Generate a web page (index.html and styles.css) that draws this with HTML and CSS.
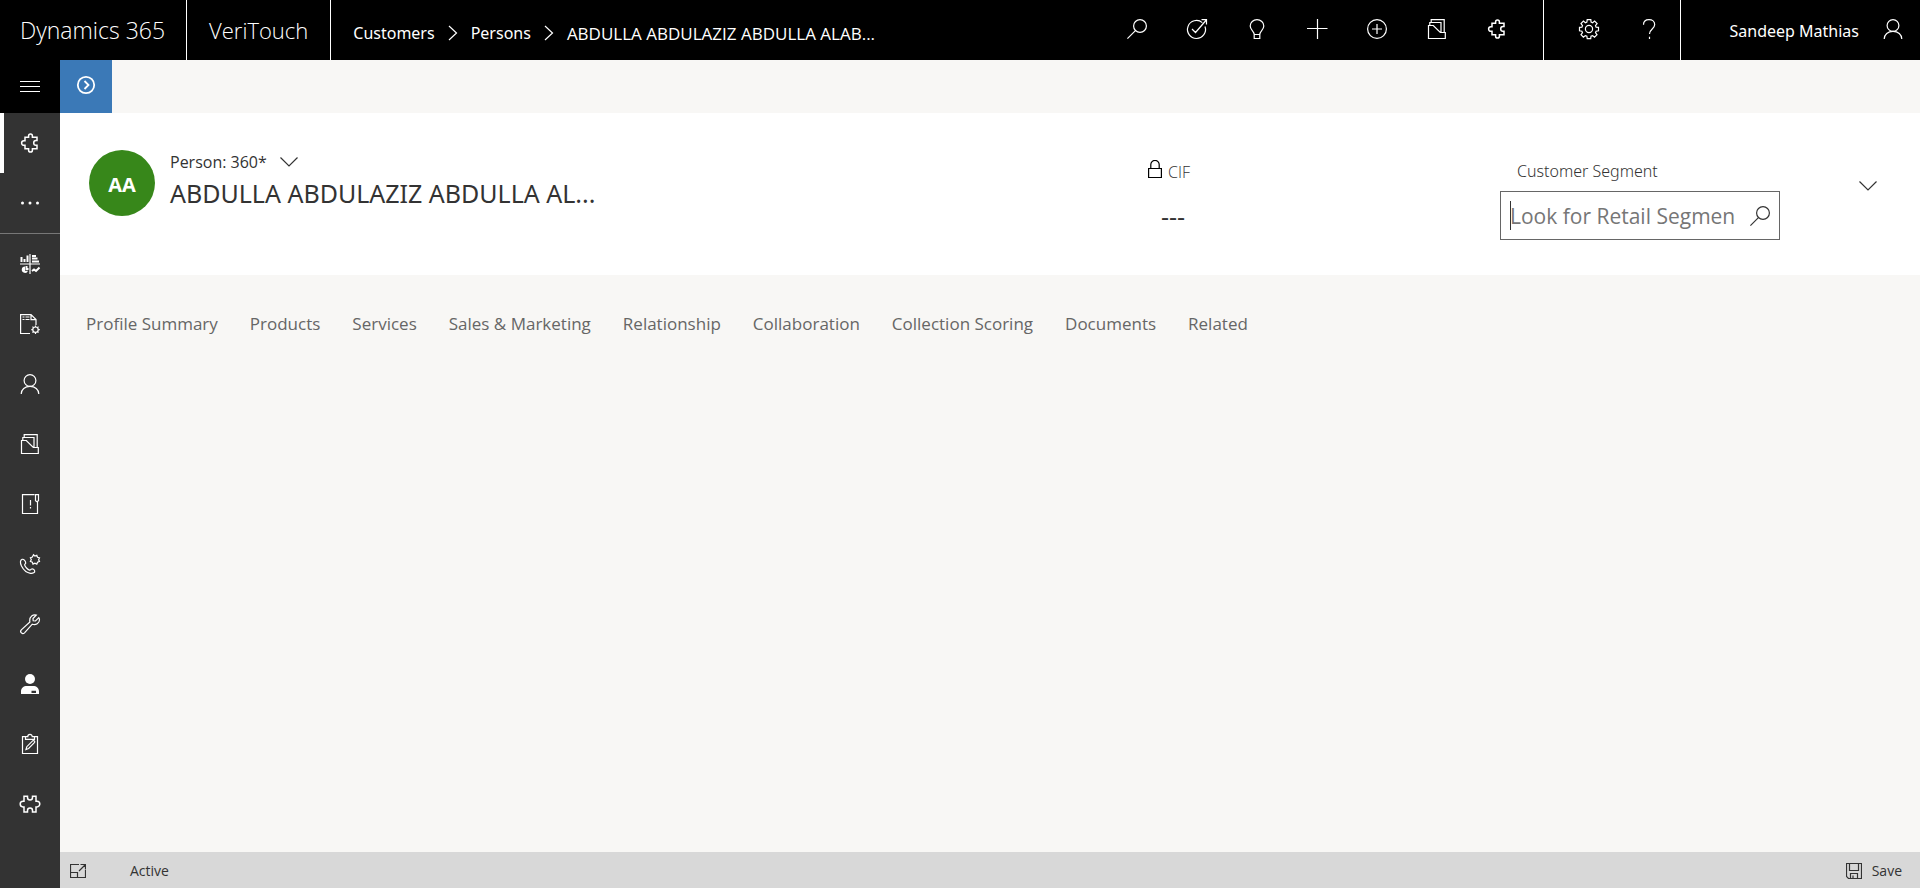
FILE: index.html
```html
<!DOCTYPE html>
<html lang="en">
<head>
<meta charset="utf-8">
<title>Person: ABDULLA ABDULAZIZ - Dynamics 365</title>
<link rel="stylesheet" href="styles.css">
</head>
<body>
<svg class="sprite" aria-hidden="true">
  <symbol id="search" viewBox="0 0 20 20"><circle cx="13" cy="7" r="6.4"/><path d="M8.4 11.6 0.4 19.6"/></symbol>
  <symbol id="puzzle" viewBox="0 0 20 20"><path stroke-width="1.5" d="M5 4.200h3.600V3a1.900 1.900 0 0 1 3.800 0v1.200H17v3.400h-1a2.300 2.300 0 0 0 0 4.600h1v3.600h-4.600v1.400a1.900 1.900 0 0 1-3.800 0v-1.400H5v-3.500H3.900a2.300 2.300 0 0 1 0-4.600H5z"/></symbol>
  <symbol id="folder" viewBox="0 0 20 20"><path d="M1.500 6.500h4.800l7 7h5v6H1.500zM2.800 6.500V3.500h11.200v10M4.200 3.500V.6h13v12.900"/></symbol>
  <symbol id="person" viewBox="0 0 20 20"><circle cx="10" cy="6.500" r="5.900"/><path d="M1.200 20c0-4.600 3.800-7.700 8.800-7.700s8.800 3.100 8.800 7.700"/></symbol>
  <symbol id="chevron-right" viewBox="0 0 10 16"><path d="m1 1 7.500 7L1 15"/></symbol>
  <symbol id="chevron-down" viewBox="0 0 18 10"><path d="m.5.500 8.500 8.500L17.500.500"/></symbol>
</svg>

<header class="topbar">
  <a class="brand" href="#">Dynamics 365</a>
  <a class="brand app-name" href="#">VeriTouch</a>
  <nav class="crumbs" aria-label="Breadcrumb">
    <a href="#">Customers</a>
    <svg class="crumb-sep"><use href="#chevron-right"/></svg>
    <a href="#">Persons</a>
    <svg class="crumb-sep"><use href="#chevron-right"/></svg>
    <a class="crumb-current" href="#">ABDULLA ABDULAZIZ ABDULLA ALAB...</a>
  </nav>
  <div class="tools">
    <button class="tool" aria-label="Search"><svg class="icon"><use href="#search"/></svg></button>
    <button class="tool" aria-label="Task flow"><svg class="icon" viewBox="0 0 20 20"><path d="M15.300 3.600A9 9 0 1 0 18 7.500M5 10l3.500 3.500L19.300 1M14.500.6h5v5"/></svg></button>
    <button class="tool" aria-label="Insights"><svg class="icon" viewBox="0 0 20 20"><path d="M7.200 15.500c0-3.500-4-4.500-4-8.500a6.800 6.400 0 0 1 13.600 0c0 4-4 5-4 8.500zM7.200 15.500v4h5.600v-4"/></svg></button>
    <button class="tool" aria-label="New"><svg class="icon" viewBox="0 0 20 20"><path d="M10.500 0v20M0 9.500h20.500"/></svg></button>
    <button class="tool" aria-label="Quick create"><svg class="icon" viewBox="0 0 20 20"><circle cx="10" cy="10" r="9.400"/><path d="M10 5v10M5 10h10"/></svg></button>
    <button class="tool" aria-label="Cases"><svg class="icon"><use href="#folder"/></svg></button>
    <button class="tool" aria-label="Extensions"><svg class="icon"><use href="#puzzle"/></svg></button>
  </div>
  <div class="tools tools-settings">
    <button class="tool" aria-label="Settings"><svg class="icon" viewBox="0 0 20 20"><path d="M8.200.6h3.600l.3 2.500 1.500.6 2-1.600 2.500 2.500-1.600 2 .6 1.500 2.400.3v3.400l-2.400.4-.6 1.500 1.500 2-2.500 2.400-2-1.500-1.500.6-.3 2.400H8.200l-.3-2.400-1.500-.6-2 1.500-2.400-2.400 1.500-2-.6-1.500-2.400-.4V8.400l2.400-.3.6-1.500-1.500-2L4.400 2.100l2 1.600 1.500-.6z"/><circle cx="10" cy="10" r="3.600"/></svg></button>
    <button class="tool" aria-label="Help"><svg class="icon" viewBox="0 0 20 20"><path d="M4.500 5.800C4.500 2.500 6.800.6 10 .6s5.700 1.900 5.700 4.900c0 4.500-5.200 4.500-5.200 9.500M10.500 17.800V20"/></svg></button>
  </div>
  <button class="user">Sandeep Mathias <svg class="icon"><use href="#person"/></svg></button>
</header>

<div class="shell">
  <nav class="rail" aria-label="Site map">
    <button class="menu" aria-label="Menu"><svg class="icon" viewBox="0 0 20 20"><path stroke-width="1" d="M0 4.500h20M0 9.500h20M0 14.500h20"/></svg></button>
    <a class="rail-item current" href="#" aria-label="Extensions"><svg class="icon"><use href="#puzzle"/></svg></a>
    <a class="rail-item" href="#" aria-label="More"><svg class="icon solid" viewBox="0 0 20 20"><circle cx="2.500" cy="10" r="1.500"/><circle cx="10" cy="10" r="1.500"/><circle cx="17.500" cy="10" r="1.500"/></svg></a>
    <a class="rail-item group" href="#" aria-label="Dashboards"><svg class="icon" viewBox="0 0 20 20"><path d="M0 10h20M10 0v20"/><path class="bold" d="M1.500 8V3M4.500 8V5M7.500 8V1.500M12 2h4M12 4.500h5.500M12 7.500h7"/><path class="fill" d="M5 12.500a3.200 3.200 0 1 0 3 4.200H5z"/><path class="bold" d="M6.500 12v3H8.500M12 17l2-1.500 2 1.500 3.500-3.500"/></svg></a>
    <a class="rail-item" href="#" aria-label="Reports"><svg class="icon" viewBox="0 0 20 20"><path d="M10 19.500H.6V.6h10.400l5 5v5.500M11 .6v5h5M2.500 3h2M5.500 3h4M2.500 5.500h2M5.500 5.500h4"/><circle cx="15.500" cy="15.700" r="2.700"/><path d="M15.500 11.500V13M15.500 18.500V20M11.300 15.700h1.500M18.200 15.700h1.600M12.500 12.700l1 1M17.500 17.700l1 1M18.500 12.700l-1 1M13.500 17.700l-1 1"/></svg></a>
    <a class="rail-item" href="#" aria-label="Persons"><svg class="icon"><use href="#person"/></svg></a>
    <a class="rail-item" href="#" aria-label="Cases"><svg class="icon"><use href="#folder"/></svg></a>
    <a class="rail-item" href="#" aria-label="Notices"><svg class="icon" viewBox="0 0 20 20"><path d="M14.500.6h-12v18.900h15V8M15.500.6h3v6l-1.500 1.200-1.500-1.200zM10.500 6v5.500M10.500 13v1.500"/></svg></a>
    <a class="rail-item" href="#" aria-label="Call settings"><svg class="icon" viewBox="0 0 20 20"><path d="M2.200 5.300C.3 6.200.1 9 1.500 12c1.800 3.600 5.200 6.800 9 7.300 2.600.3 4.500-.8 4.200-2.300-.3-1.400-2-2.500-3.200-2-.8.300-.9 1.300-2 1.100-2-.6-4.300-3.300-4.800-5-.2-1 1-1.200 1-2.200 0-1.600-1.800-4-3.500-3.600z"/><path d="m13.500.800 1.400 1.300 1.900-.8.700 1.900 2 .6-.9 1.900.9 1.800-2 .7-.7 1.900-1.900-.9-1.900.9-.6-1.900-2-.7.900-1.900-.9-1.800 2-.7z"/></svg></a>
    <a class="rail-item" href="#" aria-label="Service"><svg class="icon" viewBox="0 0 20 20"><path d="M18.800 3.600 15.500 7l-2.300-.2-.2-2.300L16.300 1C13 .1 9.500 2.500 9.700 6.700L9.900 8 1.300 15.800c-2 2.300 1.200 5 3.200 3l7.800-8.600c3.500 1.200 7.200-1 7.200-4.400 0-.8-.2-1.600-.7-2.200z"/></svg></a>
    <a class="rail-item" href="#" aria-label="Contacts"><svg class="icon solid" viewBox="0 0 20 20"><circle cx="10" cy="5" r="5"/><path d="M1 20v-2.500C1 14 3.500 12 7 12h6c3.500 0 6 2 6 5.500V20h-3v-3.200h-4.500v2.200H16v1z"/></svg></a>
    <a class="rail-item" href="#" aria-label="Surveys"><svg class="icon" viewBox="0 0 20 20"><path d="M5.500 2.600h-3v16.900h15V2.600h-3M5.500 5.300V2.600h2.300a2.200 2.200 0 0 1 4.400 0h2.300v2.700zM6 15.500l.8-2.800 6-6c1.200-.6 2.400.6 1.800 1.800l-6 6z"/></svg></a>
    <a class="rail-item" href="#" aria-label="Add-ons"><svg class="icon" viewBox="0 0 20 20"><path stroke-width="1.500" d="M4 2.300h3.500v1.300a2.500 2.500 0 0 0 5 0V2.300H16v5h1a2.600 2.600 0 0 1 0 5.600h-1v5h-3.500v-1.500a2.500 2.500 0 0 0-5 0v1.500H4v-5H3a2.600 2.600 0 0 1 0-5.600h1z"/></svg></a>
  </nav>

  <div class="content">
    <div class="commands">
      <button class="expand" aria-label="Expand"><svg class="icon" viewBox="0 0 20 20"><circle cx="10" cy="10" r="8.200"/><path d="m8.500 6 4 4-4 4"/></svg></button>
    </div>

    <section class="record">
      <div class="avatar">AA</div>
      <div class="identity">
        <button class="form-picker">Person: 360* <svg class="chevron"><use href="#chevron-down"/></svg></button>
        <h1>ABDULLA ABDULAZIZ ABDULLA AL...</h1>
      </div>
      <dl class="cif">
        <dt><svg class="lock" viewBox="0 0 14 18"><path d="M.6 8.500h12.800v9H.6zM2.800 8.500V4.600a4.200 4.200 0 0 1 8.400 0v3.900"/></svg>CIF</dt>
        <dd>---</dd>
      </dl>
      <div class="segment">
        <label for="segment">Customer Segment</label>
        <div class="lookup">
          <span class="caret"></span>
          <input id="segment" type="text" placeholder="Look for Retail Segmen">
          <button aria-label="Search records"><svg class="icon"><use href="#search"/></svg></button>
        </div>
      </div>
      <button class="more" aria-label="Show more fields"><svg class="chevron"><use href="#chevron-down"/></svg></button>
    </section>

    <nav class="tabs" aria-label="Form sections">
      <a href="#">Profile Summary</a>
      <a href="#">Products</a>
      <a href="#">Services</a>
      <a href="#">Sales &amp; Marketing</a>
      <a href="#">Relationship</a>
      <a href="#">Collaboration</a>
      <a href="#">Collection Scoring</a>
      <a href="#">Documents</a>
      <a href="#">Related</a>
    </nav>

    <footer class="statusbar">
      <button aria-label="Pop out"><svg class="small-icon" viewBox="0 0 16 16"><path d="M9 1.500H.5v13h15V7M.5 9.500h7v5M10.500 1.500h5v5M15.500 1.500 9 8"/></svg></button>
      <span class="state">Active</span>
      <button class="save"><svg class="small-icon" viewBox="0 0 16 16"><path d="M.5.500h15v15H2.500l-2-2zM3.500.500v7h9v-7M4.500 15.500v-5h7v5M7 15.500v-3"/></svg>Save</button>
    </footer>
  </div>
</div>
</body>
</html>
```

FILE: styles.css
```css
* { box-sizing: border-box; }

body {
  margin: 0;
  min-height: 100vh;
  display: flex;
  flex-direction: column;
  font-family: "Open Sans", "Noto Sans", sans-serif;
  font-size: 16px;
  color: #333;
  background: #f8f7f5;
}

a { color: inherit; text-decoration: none; }

button {
  padding: 0;
  border: 0;
  background: none;
  color: inherit;
  font: inherit;
  display: flex;
  align-items: center;
}

svg {
  flex: none;
  fill: none;
  stroke: currentColor;
  stroke-width: 1.2;
}

.sprite { position: absolute; width: 0; height: 0; }
.icon { width: 20px; height: 20px; overflow: visible; }
.small-icon { width: 16px; height: 16px; }
.chevron { width: 18px; height: 10px; }
.solid { fill: currentColor; stroke: none; }
.fill { fill: currentColor; stroke: none; }
.bold { stroke-width: 2; }

.crumbs, .user, h1, .segment label {
  font-family: "Noto Sans", "Open Sans", sans-serif;
}

/* Top bar */
.topbar {
  height: 60px;
  display: flex;
  background: #000;
  color: #fff;
}

.brand {
  padding: 0 21px 0 20px;
  border-right: 1px solid #fff;
  font-size: 23px;
  font-weight: 300;
  line-height: 60px;
  white-space: nowrap;
}

.app-name { padding: 0 22px; font-size: 22px; }

.crumbs {
  padding: 6px 0 0 22px;
  display: flex;
  align-items: center;
  gap: 13px;
  white-space: nowrap;
}

.crumb-sep { width: 10px; height: 16px; }

.crumb-current {
  font-family: "Open Sans", "Noto Sans", sans-serif;
  font-size: 17px;
}

.tools {
  margin-left: auto;
  padding-right: 16px;
  display: flex;
}

.tool {
  width: 60px;
  height: 58px;
  justify-content: center;
}

.tools-settings {
  margin-left: 0;
  padding: 0 1px 0 15px;
  border: solid #fff;
  border-width: 0 1px;
}

.user {
  height: 60px;
  padding: 2px 17px 0 49px;
  gap: 24px;
  white-space: nowrap;
}

.user .icon { margin-bottom: 4px; }

/* Site map */
.shell { flex: 1; display: flex; }

.rail {
  width: 60px;
  background: #333;
  color: #fff;
}

.menu {
  width: 100%;
  height: 53px;
  padding-top: 1px;
  justify-content: center;
  background: #000;
}

.rail-item {
  height: 60px;
  display: flex;
  align-items: center;
  justify-content: center;
}

.current { box-shadow: inset 4px 0 #fff; }
.group { height: 61px; border-top: 1px solid #777; }

/* Record */
.content {
  flex: 1;
  min-width: 0;
  display: flex;
  flex-direction: column;
}

.commands { height: 53px; }

.expand {
  width: 52px;
  height: 53px;
  padding-bottom: 3px;
  justify-content: center;
  background: #3b79b7;
  color: #fff;
}

.expand .icon { stroke-width: 1.8; }

.record {
  height: 162px;
  padding: 0 43px 0 29px;
  display: flex;
  align-items: flex-start;
  background: #fff;
}

.avatar {
  width: 66px;
  height: 66px;
  margin-top: 37px;
  border-radius: 50%;
  background: #37871a;
  color: #fff;
  font-size: 20px;
  font-weight: 700;
  line-height: 70px;
  text-align: center;
}

.identity { margin: 36px auto 0 15px; }
.form-picker { height: 26px; gap: 13px; }

h1 {
  margin: 0;
  font-size: 25px;
  font-weight: 400;
  line-height: 36px;
  white-space: nowrap;
}

.cif { width: 352px; margin: 47px 0 0; }

.cif dt {
  display: flex;
  gap: 6px;
  font-weight: 300;
  line-height: 24px;
}

.lock { width: 14px; height: 18px; color: #000; }

.cif dd {
  margin: 8px 0 0 13px;
  font-size: 25px;
  line-height: 48px;
}

.segment { width: 280px; margin: 46px 79px 0 0; }

.segment label {
  display: block;
  padding-left: 17px;
  font-weight: 300;
  line-height: 24px;
}

.lookup {
  position: relative;
  height: 49px;
  margin-top: 8px;
  padding: 0 9px;
  display: flex;
  align-items: center;
  border: 1px solid #666;
}

.lookup input {
  flex: 1;
  min-width: 0;
  padding: 0;
  border: 0;
  outline: 0;
  background: none;
  font: inherit;
  font-size: 21px;
}

.lookup input::placeholder { color: #767676; opacity: 1; }

.caret {
  position: absolute;
  top: 9px;
  left: 9px;
  width: 1px;
  height: 29px;
  background: #333;
}

.more { margin-top: 68px; }

.tabs {
  flex: 1;
  padding: 36px 26px;
  display: flex;
  align-items: flex-start;
  gap: 32px;
  color: #666;
  font-size: 17px;
  line-height: 26px;
  white-space: nowrap;
}

.statusbar {
  height: 36px;
  padding: 1px 18px 0 10px;
  display: flex;
  align-items: center;
  background: #d8d8d8;
  font-size: 14px;
}

.state { margin-left: 44px; }
.save { margin-left: auto; gap: 10px; }
```
